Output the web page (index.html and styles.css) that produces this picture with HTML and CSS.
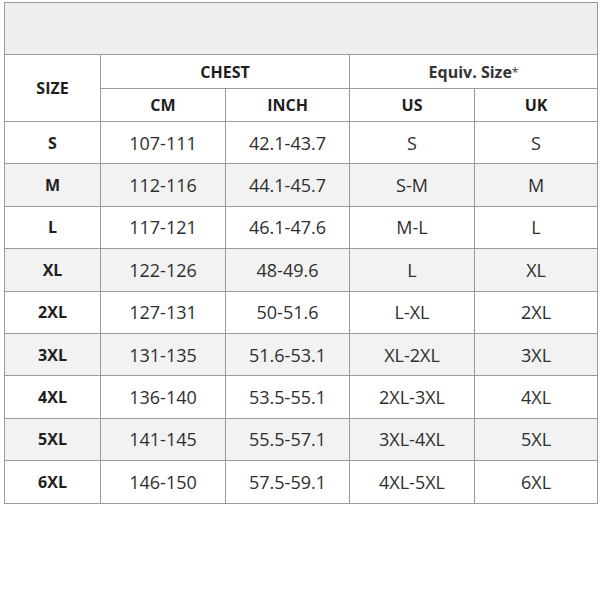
FILE: index.html
```html
<!DOCTYPE html>
<html>
<head>
<meta charset="utf-8">
<link rel="stylesheet" href="styles.css">
</head>
<body>
<table class="chart">
  <colgroup>
    <col class="c1"><col class="c2"><col class="c3"><col class="c4"><col class="c5">
  </colgroup>
  <tr class="banner"><td colspan="5"></td></tr>
  <tr class="h1">
    <th rowspan="2">SIZE</th>
    <th colspan="2">CHEST</th>
    <th colspan="2" class="equiv">Equiv. Size<span class="star">*</span></th>
  </tr>
  <tr class="h2">
    <th>CM</th><th>INCH</th><th>US</th><th>UK</th>
  </tr>
  <tr><th>S</th><td>107-111</td><td>42.1-43.7</td><td>S</td><td>S</td></tr>
  <tr class="alt"><th>M</th><td>112-116</td><td>44.1-45.7</td><td>S-M</td><td>M</td></tr>
  <tr><th>L</th><td>117-121</td><td>46.1-47.6</td><td>M-L</td><td>L</td></tr>
  <tr class="alt"><th>XL</th><td>122-126</td><td>48-49.6</td><td>L</td><td>XL</td></tr>
  <tr><th>2XL</th><td>127-131</td><td>50-51.6</td><td>L-XL</td><td>2XL</td></tr>
  <tr class="alt"><th>3XL</th><td>131-135</td><td>51.6-53.1</td><td>XL-2XL</td><td>3XL</td></tr>
  <tr><th>4XL</th><td>136-140</td><td>53.5-55.1</td><td>2XL-3XL</td><td>4XL</td></tr>
  <tr class="alt"><th>5XL</th><td>141-145</td><td>55.5-57.1</td><td>3XL-4XL</td><td>5XL</td></tr>
  <tr><th>6XL</th><td>146-150</td><td>57.5-59.1</td><td>4XL-5XL</td><td>6XL</td></tr>
</table>
</body>
</html>
```
FILE: styles.css
```css
html, body {
  margin: 0;
  padding: 0;
  background: #ffffff;
}
body {
  padding: 2px 0 0 4px;
  font-family: "Open Sans", "Noto Sans", sans-serif;
  color: #2a2a2a;
}
.chart {
  border-collapse: collapse;
  table-layout: fixed;
  width: 593px;
}
.c1 { width: 96px; }
.c2 { width: 125px; }
.c3 { width: 124px; }
.c4 { width: 125px; }
.c5 { width: 123px; }
.chart td, .chart th {
  border: 1px solid #9a9a9a;
  text-align: center;
  vertical-align: middle;
  padding: 0;
  font-size: 18px;
  height: 41.4px;
}
.chart th {
  font-weight: bold;
  font-size: 16px;
  color: #1e1e1e;
}
.chart td {
  font-weight: normal;
  color: #2e2e2e;
}
.banner td {
  height: 51px;
  background: #efefef;
}
.h1 th { height: 33px; }
.h2 th { height: 32px; }
.h1 .equiv {
  font-weight: bold;
  color: #333333;
}
.star {
  font-size: 12px;
  font-weight: normal;
  vertical-align: 1px;
}
.alt th, .alt td {
  background: #f2f2f2;
}
```
